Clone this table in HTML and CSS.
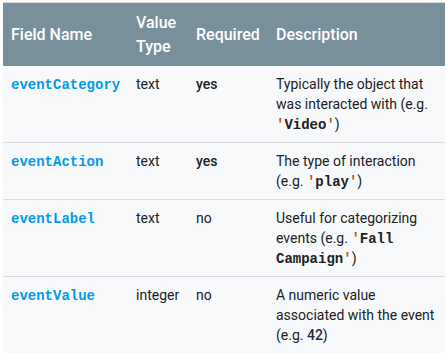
FILE: index.html
```html
<!DOCTYPE html>
<html lang="en">
  <head>
    <meta charset="utf-8" />
    <title>Event fields</title>
    <link rel="stylesheet" href="styles.css">
  </head>
  <body>
    <table class="fields">
      <colgroup>
        <col class="c-name">
        <col class="c-type">
        <col class="c-req">
        <col class="c-desc">
      </colgroup>
      <thead>
        <tr>
          <th>Field Name</th>
          <th>Value Type</th>
          <th>Required</th>
          <th>Description</th>
        </tr>
      </thead>
      <tbody>
        <tr>
          <td><code class="field">eventCategory</code></td>
          <td>text</td>
          <td class="yes">yes</td>
          <td>Typically the object that was interacted with (e.g. <code class="str"><span class="q">'</span>Video<span class="q">'</span></code>)</td>
        </tr>
        <tr>
          <td><code class="field">eventAction</code></td>
          <td>text</td>
          <td class="yes">yes</td>
          <td>The type of interaction (e.g. <code class="str"><span class="q">'</span>play<span class="q">'</span></code>)</td>
        </tr>
        <tr>
          <td><code class="field">eventLabel</code></td>
          <td>text</td>
          <td>no</td>
          <td>Useful for categorizing events (e.g. <code class="str"><span class="q">'</span>Fall Campaign<span class="q">'</span></code>)</td>
        </tr>
        <tr>
          <td><code class="field">eventValue</code></td>
          <td>integer</td>
          <td>no</td>
          <td>A numeric value associated with the event (e.g. <b class="num">42</b>)</td>
        </tr>
      </tbody>
    </table>
  </body>
</html>
```

FILE: styles.css
```css
body {
     margin: 0;
     padding: 2px 2px 3px 3px;
     background: #ffffff;
     font-family: Roboto, "Noto Sans", sans-serif;
}

.fields {
     width: 442px;
     table-layout: fixed;
     border-collapse: collapse;
     border-top: 1px solid #dadce0;
     background-color: #f8f9fa;
     color: #202124;
     font-size: 14px;
     line-height: 20px;
}

.c-name { width: 125px; }
.c-type { width: 60px; }
.c-req { width: 80px; }
.c-desc { width: 177px; }

th {
     background-color: #78909c;
     color: #ffffff;
     font-size: 16px;
     font-weight: 500;
     line-height: 24px;
     text-align: left;
     vertical-align: middle;
     padding: 8px 8px 7px 8px;
}

td {
     padding: 8px;
     vertical-align: top;
     text-align: left;
     border-bottom: 1px solid #dadce0;
}

tbody tr:last-child td {
     border-bottom: none;
     padding-bottom: 12px;
}

code {
     font-family: "Liberation Mono", "DejaVu Sans Mono", monospace;
     font-size: 14px;
     font-weight: bold;
     line-height: 14px;
}

.field {
     color: #039be5;
}

.str {
     color: #202124;
}

.q {
     color: #b06000;
}

.yes {
     font-weight: 500;
}

.num {
     font-weight: 500;
     color: #1f2a44;
}
```
